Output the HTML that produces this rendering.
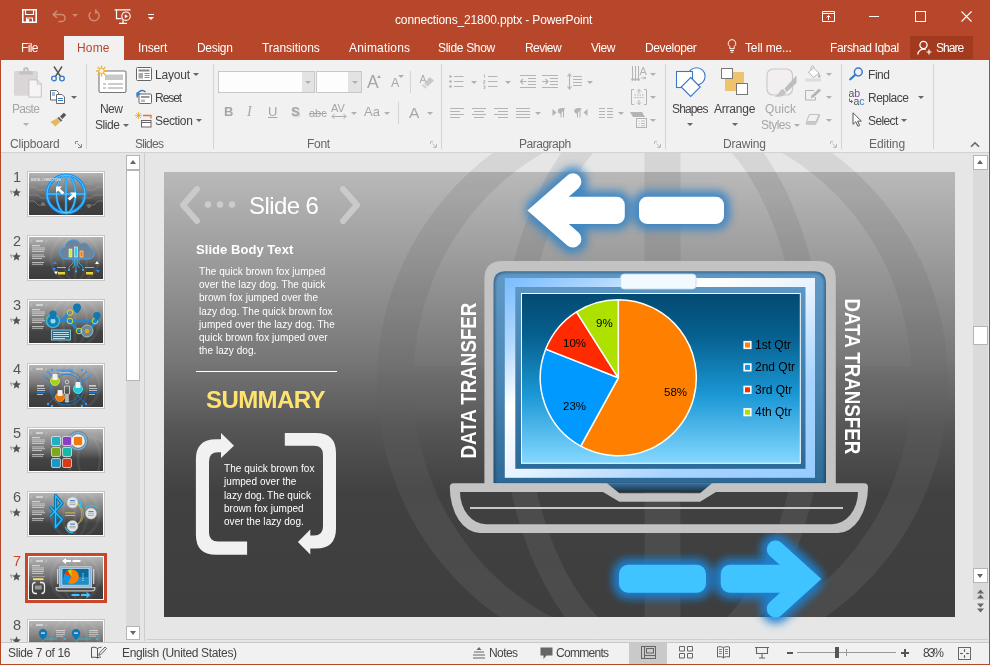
<!DOCTYPE html>
<html lang="en">
<head>
<meta charset="utf-8">
<title>connections_21800.pptx - PowerPoint</title>
<style>
html,body{margin:0;padding:0;}
body{width:990px;height:665px;position:relative;overflow:hidden;background:#e6e6e6;font-family:"Liberation Sans",sans-serif;font-size:12px;color:#444;}
.a{position:absolute;}
.t{position:absolute;will-change:transform;white-space:nowrap;line-height:14px;font-size:12px;color:#444;letter-spacing:0;}
.w{color:#fff;}
.g{color:#a6a6a6;}
.lbl{color:#666;}
.sep{position:absolute;width:1px;background:#d4d4d4;top:64px;height:85px;}
svg{position:absolute;overflow:visible;will-change:transform;}
.w{will-change:transform;}
.dd{position:absolute;width:0;height:0;border-left:3px solid transparent;border-right:3px solid transparent;border-top:3px solid #666;}
.ddg{border-top-color:#b0b0b0;}
</style>
</head>
<body>
<!-- ===== title bar + tab row ===== -->
<div class="a" id="titlebar" style="left:0;top:0;width:990px;height:60px;background:#b7472a;"></div>
<!-- quick access toolbar -->
<svg style="left:22px;top:9px" width="15" height="14" viewBox="0 0 15 14"><path d="M0.800 0.800h13.400v12.400h-13.400z" fill="none" stroke="#fff" stroke-width="1.600"/><path d="M3.500 1v4.500h8v-4.500 M4.500 13v-4h6v4" fill="none" stroke="#fff" stroke-width="1.200"/><rect x="5" y="10" width="2.2" height="3" fill="#fff"/></svg>
<svg style="left:52px;top:10px" width="15" height="12" viewBox="0 0 15 12"><path d="M5 0.8L1.2 4.4L5 8 M1.5 4.4H9.5a3.6 3.6 0 0 1 0 7.2H6.5" fill="none" stroke="#d08a74" stroke-width="1.5"/></svg>
<div class="dd" style="left:72px;top:14px;border-top-color:#d08a74"></div>
<svg style="left:87px;top:9px" width="14" height="13" viewBox="0 0 14 13"><path d="M3.6 3.2A5 5 0 1 0 8.6 2 M8.8 0.2v4.6" fill="none" stroke="#d08a74" stroke-width="1.5"/></svg>
<svg style="left:114px;top:9px" width="18" height="16" viewBox="0 0 18 16"><path d="M0.5 0.8h16 M2.5 1v8.6h5 M9 10v4 M5 14.4h8" fill="none" stroke="#fff" stroke-width="1.2"/><circle cx="12" cy="7.2" r="4.2" fill="#b7472a" stroke="#fff" stroke-width="1.1"/><path d="M10.8 5.2v4l3.2-2z" fill="#fff"/></svg>
<div class="a" style="left:148px;top:14px;width:6px;height:1px;background:#fff"></div>
<div class="dd" style="left:148px;top:17px;border-top-color:#fff"></div>
<span class="t w" style="left:395.2px;top:13px;letter-spacing:-0.14px">connections_21800.pptx - PowerPoint</span>
<!-- window controls -->
<svg style="left:822px;top:11px" width="13" height="11" viewBox="0 0 13 11"><path d="M0.5 0.5h12v10h-12z M0.5 2.5h12" fill="none" stroke="#fff" stroke-width="1"/><path d="M6.5 9V4.5 M4.5 6.5l2-2l2 2" fill="none" stroke="#fff" stroke-width="1"/></svg>
<div class="a" style="left:869px;top:16px;width:10px;height:1px;background:#fff"></div>
<div class="a" style="left:915px;top:11px;width:9px;height:9px;border:1px solid #fff"></div>
<svg style="left:961px;top:11px" width="11" height="11" viewBox="0 0 11 11"><path d="M0.5 0.5l10 10 M10.5 0.5l-10 10" fill="none" stroke="#fff" stroke-width="1.1"/></svg>
<!-- tabs -->
<div class="a" style="left:64px;top:36px;width:60px;height:24px;background:#f1f1f1"></div>
<span class="t w" style="left:21.1px;top:41px;letter-spacing:-0.65px">File</span>
<span class="t" style="left:77px;top:41px;color:#b7472a;letter-spacing:0.16px">Home</span>
<span class="t w" style="left:138.4px;top:41px;letter-spacing:-0.14px">Insert</span>
<span class="t w" style="left:196.5px;top:41px;letter-spacing:-0.31px">Design</span>
<span class="t w" style="left:261.6px;top:41px;letter-spacing:-0.04px">Transitions</span>
<span class="t w" style="left:348.5px;top:41px;letter-spacing:0.18px">Animations</span>
<span class="t w" style="left:438.4px;top:41px;letter-spacing:-0.31px">Slide Show</span>
<span class="t w" style="left:524.8px;top:41px;letter-spacing:-0.55px">Review</span>
<span class="t w" style="left:590.9px;top:41px;letter-spacing:-0.5px">View</span>
<span class="t w" style="left:645.2px;top:41px;letter-spacing:-0.36px">Developer</span>
<svg style="left:727px;top:39px" width="10" height="14" viewBox="0 0 10 14"><path d="M5 0.6a3.8 3.8 0 0 1 2.2 6.9v2.2h-4.4v-2.2A3.8 3.8 0 0 1 5 0.6z M3 11.5h4 M3.6 13.2h2.8" fill="none" stroke="#fff" stroke-width="1"/></svg>
<span class="t w" style="left:744.5px;top:41px;letter-spacing:-0.14px">Tell me...</span>
<span class="t w" style="left:829.9px;top:41px;letter-spacing:-0.35px">Farshad Iqbal</span>
<div class="a" style="left:910px;top:36px;width:63px;height:23px;background:#a23a20"></div>
<svg style="left:917px;top:40px" width="16" height="16" viewBox="0 0 16 16"><circle cx="6.5" cy="5" r="3.6" fill="none" stroke="#fff" stroke-width="1.3"/><path d="M0.8 14.5a5.8 5.8 0 0 1 8-5" fill="none" stroke="#fff" stroke-width="1.3"/><path d="M12 9.5v5 M9.5 12h5" stroke="#fff" stroke-width="1.2"/></svg>
<span class="t w" style="left:936px;top:41px;letter-spacing:-0.96px">Share</span>

<!-- ===== ribbon ===== -->
<div class="a" id="ribbon" style="left:1px;top:60px;width:988px;height:92px;background:#f1f1f1;border-bottom:1px solid #d2d2d2;"></div>
<!-- ===== Clipboard group ===== -->
<svg style="left:13px;top:67px" width="30" height="32" viewBox="0 0 30 32"><rect x="1" y="4" width="24" height="24.700" rx="1.500" fill="#dad6d8"/><path d="M6.200 7.600V4.300h4V2.800a2.800 2.800 0 0 1 5.600 0V4.300h4V7.600Z" fill="#c6c2c4"/><circle cx="13" cy="3.300" r="1" fill="#eee"/><path d="M15.900 12.900h8.300l4.100 4.100v13.100h-12.400z" fill="#f7f4f7" stroke="#c6c0c4" stroke-width="1"/><path d="M24.200 12.900v4.100h4.100" fill="none" stroke="#c6c0c4" stroke-width="1"/></svg>
<span class="t g" style="left:11.7px;top:102px;letter-spacing:-0.72px">Paste</span>
<div class="dd ddg" style="left:23px;top:123px"></div>
<svg style="left:50px;top:66px" width="16" height="16" viewBox="0 0 16 16"><path d="M4 0.500L10.500 10.500 M12 0.500L5.500 10.500" stroke="#555" stroke-width="1.4" fill="none"/><circle cx="4" cy="12.500" r="2.300" fill="none" stroke="#3b78c3" stroke-width="1.300"/><circle cx="12" cy="12.500" r="2.300" fill="none" stroke="#3b78c3" stroke-width="1.300"/></svg>
<svg style="left:50px;top:90px" width="16" height="14" viewBox="0 0 16 14"><path d="M0.500 0.500h6l2 2v7.500h-8z" fill="#fff" stroke="#666" stroke-width="1"/><path d="M6.500 4.500h5.500l2.500 2.500v6.500h-8z" fill="#fff" stroke="#666" stroke-width="1"/><path d="M8 8.500h5 M8 10.500h5" stroke="#3b78c3" stroke-width="1"/><path d="M2 3h3 M2 5h3" stroke="#3b78c3" stroke-width="1"/></svg>
<div class="dd" style="left:71px;top:96px"></div>
<svg style="left:50px;top:112px" width="17" height="15" viewBox="0 0 17 15"><path d="M10 4.500l3.800-3.800l2.400 2.400l-3.800 3.800z" fill="#555"/><path d="M8.800 4.800l3.600 3.600l-1.600 1.400l-3.600-3.500z" fill="#666"/><path d="M6.800 6.600l3.500 3.500l-5 4.400l-4.800-4.800z" fill="#eab85c"/></svg>
<span class="t lbl" style="left:10.2px;top:137px;letter-spacing:-0.21px">Clipboard</span>
<svg style="left:75px;top:141px" width="7" height="7" viewBox="0 0 7 7"><path d="M0.500 3V0.500H3 M6.500 3v3.500H3 M2.500 2.500l3.500 3.500" fill="none" stroke="#888" stroke-width="1"/></svg>
<div class="sep" style="left:86px"></div>
<!-- ===== Slides group ===== -->
<svg style="left:95px;top:65px" width="32" height="29" viewBox="0 0 32 29"><rect x="4" y="6" width="27" height="21.500" rx="1.500" fill="#fff" stroke="#777" stroke-width="1.100"/><rect x="10" y="9.500" width="18" height="5.500" fill="#c9c9c9"/><path d="M8 19h3 M13 19h15 M8 23h3 M13 23h15" stroke="#999" stroke-width="1"/><path d="M6.500 0.500v11 M1 6h11 M2.600 2.100l7.800 7.800 M10.400 2.100l-7.800 7.800" stroke="#f0b43c" stroke-width="1.400"/><circle cx="6.500" cy="6" r="2.600" fill="#fff6dc" stroke="#f0b43c" stroke-width="1"/></svg>
<span class="t" style="left:99.9px;top:102px;letter-spacing:-0.55px">New</span>
<span class="t" style="left:94.5px;top:118px;letter-spacing:-0.42px">Slide</span>
<div class="dd" style="left:123px;top:124px"></div>
<svg style="left:136px;top:67px" width="16" height="14" viewBox="0 0 16 14"><rect x="0.500" y="0.500" width="15" height="13" rx="1" fill="#fff" stroke="#666" stroke-width="1"/><rect x="2.500" y="2.500" width="11" height="2" fill="#888"/><rect x="2.500" y="6" width="4.500" height="5.500" fill="#aaa"/><path d="M8.500 6.500h5 M8.500 8.500h5 M8.500 10.500h5" stroke="#888" stroke-width="1"/></svg>
<span class="t" style="left:155px;top:68px;letter-spacing:-0.17px">Layout</span>
<div class="dd" style="left:193px;top:73px"></div>
<svg style="left:136px;top:89px" width="16" height="15" viewBox="0 0 16 15"><rect x="3" y="5" width="12.500" height="9.500" rx="1" fill="#fff" stroke="#666" stroke-width="1"/><rect x="5" y="7" width="8.500" height="2" fill="#999"/><rect x="5" y="10.500" width="4" height="2.500" fill="#bbb"/><path d="M1.500 8.500A5 5 0 0 1 9.500 3" fill="none" stroke="#3b78c3" stroke-width="1.500"/><path d="M0 3.500l4.500 0.500l-3 3.500z" fill="#3b78c3"/></svg>
<span class="t" style="left:155px;top:91px;letter-spacing:-1.04px">Reset</span>
<svg style="left:135px;top:112px" width="17" height="16" viewBox="0 0 17 16"><path d="M3.500 0v7 M0 3.500h7 M1 1l5 5 M6 1l-5 5" stroke="#f0b43c" stroke-width="1"/><path d="M8 3.500h8v3" fill="none" stroke="#e8703a" stroke-width="1.300"/><rect x="6.500" y="8.500" width="9.500" height="6.500" fill="#fff" stroke="#666" stroke-width="1"/><path d="M6.500 10.500h9.500" stroke="#666" stroke-width="1"/></svg>
<span class="t" style="left:155px;top:114px;letter-spacing:-0.37px">Section</span>
<div class="dd" style="left:196px;top:119px"></div>
<span class="t lbl" style="left:135px;top:137px;letter-spacing:-0.76px">Slides</span>
<div class="sep" style="left:213px"></div>
<!-- ===== Font group ===== -->
<div class="a" style="left:218px;top:71px;width:97px;height:22px;box-sizing:border-box;background:#fdfdfd;border:1px solid #c8c8c8"></div>
<div class="a" style="left:302px;top:72px;width:12px;height:20px;background:#e3e3e3"></div>
<div class="dd ddg" style="left:305px;top:81px"></div>
<div class="a" style="left:316px;top:71px;width:46px;height:22px;box-sizing:border-box;background:#fdfdfd;border:1px solid #c8c8c8"></div>
<div class="a" style="left:348px;top:72px;width:13px;height:20px;background:#e3e3e3"></div>
<div class="dd ddg" style="left:352px;top:81px"></div>
<span class="t g" style="left:367px;top:72px;font-size:17.500px;line-height:20px">A</span>
<div class="a" style="left:377px;top:75px;width:0;height:0;border-left:2.500px solid transparent;border-right:2.500px solid transparent;border-bottom:3px solid #aaa"></div>
<span class="t g" style="left:391px;top:76px;font-size:12.500px;line-height:15px">A</span>
<div class="dd ddg" style="left:398px;top:75px"></div>
<div class="a" style="left:410px;top:71px;width:1px;height:22px;background:#d4d4d4"></div>
<svg style="left:419px;top:74px" width="16" height="16" viewBox="0 0 16 16"><path d="M1 9L4 1L7 9 M2.200 6.300H5.900" fill="none" stroke="#a8a8a8" stroke-width="1"/><path d="M10.700 3.100L15 6.500L8.600 12.600L5.200 9.200Z" fill="#c9c7c8"/><path d="M4.300 9.900L7.900 13.300L6.400 14.800L2.800 11.300Z" fill="#d3d0d1"/></svg>
<span class="t g" style="left:224px;top:105px;font-weight:bold;font-size:13px">B</span>
<span class="t g" style="left:247px;top:105px;font-style:italic;font-family:'Liberation Serif',serif;font-size:14px">I</span>
<span class="t g" style="left:268px;top:105px;font-size:13px;text-decoration:underline">U</span>
<span class="t g" style="left:291px;top:105px;font-size:13px;font-weight:bold;text-shadow:1px 1px 1px #ccc">S</span>
<span class="t g" style="left:309px;top:106px;font-size:11px;text-decoration:line-through">abc</span>
<span class="t g" style="left:331px;top:101px;font-size:11px">AV</span>
<svg style="left:331px;top:113px" width="16" height="7" viewBox="0 0 16 7"><path d="M1 3.500h14 M3.500 1L1 3.500L3.500 6 M12.500 1L15 3.500L12.500 6" fill="none" stroke="#aaa" stroke-width="1"/></svg>
<div class="dd ddg" style="left:351px;top:112px"></div>
<span class="t g" style="left:364px;top:105px;font-size:13px">Aa</span>
<div class="dd ddg" style="left:384px;top:112px"></div>
<div class="a" style="left:398px;top:102px;width:1px;height:22px;background:#d4d4d4"></div>
<span class="t g" style="left:408.500px;top:104px;font-size:15.500px;line-height:18px">A</span>
<div class="dd ddg" style="left:427px;top:112px"></div>
<span class="t lbl" style="left:307px;top:137px;letter-spacing:-0.27px">Font</span>
<svg style="left:430px;top:141px" width="7" height="7" viewBox="0 0 7 7"><path d="M0.500 3V0.500H3 M6.500 3v3.500H3 M2.500 2.500l3.500 3.500" fill="none" stroke="#bbb" stroke-width="1"/></svg>
<div class="sep" style="left:441px"></div>
<!-- ===== Paragraph group ===== -->
<svg style="left:449px;top:74px" width="15" height="15" viewBox="0 0 15 15"><path d="M5 2.500h9.500 M5 7.500h9.500 M5 12.500h9.500" stroke="#b4b4b4" stroke-width="1"/><circle cx="1.500" cy="2.500" r="1.300" fill="#b4b4b4"/><circle cx="1.500" cy="7.500" r="1.300" fill="#b4b4b4"/><circle cx="1.500" cy="12.500" r="1.300" fill="#b4b4b4"/></svg>
<div class="dd ddg" style="left:471px;top:81px"></div>
<svg style="left:483px;top:74px" width="15" height="15" viewBox="0 0 15 15"><path d="M5 2.500h9.500 M5 7.500h9.500 M5 12.500h9.500" stroke="#b4b4b4" stroke-width="1"/><path d="M0.500 1h1v3 M0.500 6.500h1.500v1.500h-1.500v1.500h1.500 M0.500 11.500h1.500v3h-1.500 M0.500 13h1.500" fill="none" stroke="#b4b4b4" stroke-width="0.800"/></svg>
<div class="dd ddg" style="left:505px;top:81px"></div>
<svg style="left:520px;top:74px" width="16" height="15" viewBox="0 0 16 15"><path d="M0 1.500h16 M8 4.500h8 M8 7.500h8 M8 10.500h8 M0 13.500h16" stroke="#b4b4b4" stroke-width="1"/><path d="M6.500 7.500h-6 M3 5L0.500 7.500L3 10" fill="none" stroke="#b4b4b4" stroke-width="1.200"/></svg>
<svg style="left:542px;top:74px" width="16" height="15" viewBox="0 0 16 15"><path d="M0 1.500h16 M8 4.500h8 M8 7.500h8 M8 10.500h8 M0 13.500h16" stroke="#b4b4b4" stroke-width="1"/><path d="M0 7.500h6 M3.500 5L6 7.500L3.500 10" fill="none" stroke="#b4b4b4" stroke-width="1.200"/></svg>
<svg style="left:567px;top:73px" width="15" height="17" viewBox="0 0 15 17"><path d="M6 3.500h9 M6 6.500h9 M6 9.500h9 M6 12.500h9" stroke="#b4b4b4" stroke-width="1"/><path d="M2.500 1v15 M0.500 3.500l2-2.500l2 2.500 M0.500 13.500l2 2.500l2-2.500" fill="none" stroke="#b4b4b4" stroke-width="1.100"/></svg>
<div class="dd ddg" style="left:587px;top:81px"></div>
<svg style="left:631px;top:66px" width="16" height="16" viewBox="0 0 16 16"><path d="M1.500 0v14.500 M4.500 0v14.500 M7.500 0v14.500 M0 12.500l1.500 2.500l1.500-2.500 M3 12.500l1.500 2.500l1.500-2.500 M6 12.500l1.500 2.500l1.500-2.500" fill="none" stroke="#b4b4b4" stroke-width="1"/><text x="8.500" y="9" font-family="Liberation Sans,sans-serif" font-size="11" fill="#b4b4b4">A</text><path d="M10 12h5 M12.500 11l2.500 1l-2.500 1" stroke="#b4b4b4" stroke-width="0.800" fill="none"/></svg>
<div class="dd ddg" style="left:650px;top:73px"></div>
<svg style="left:631px;top:89px" width="16" height="16" viewBox="0 0 16 16"><path d="M3 0.500h-2.500v15h2.500 M13 0.500h2.500v15h-2.500" fill="none" stroke="#b4b4b4" stroke-width="1"/><path d="M3.500 6h9 M3.500 8.500h9" stroke="#b4b4b4" stroke-width="1" stroke-dasharray="1.500 1"/><path d="M8 0.500v4 M6 2.500l2-2l2 2 M8 15.500v-4.500 M6 13.500l2 2l2-2" fill="none" stroke="#b4b4b4" stroke-width="1"/></svg>
<div class="dd ddg" style="left:650px;top:96px"></div>
<svg style="left:630px;top:111px" width="17" height="17" viewBox="0 0 17 17"><path d="M0 1h12l3 5h-12z" fill="#b4b4b4"/><rect x="6.500" y="7.500" width="10" height="9" fill="#f4f4f4" stroke="#b4b4b4" stroke-width="1"/><path d="M8.500 10h1 M11 10h4 M8.500 12.500h1 M11 12.500h4 M8.500 14.800h1 M11 14.800h4" stroke="#b4b4b4" stroke-width="0.900"/></svg>
<div class="dd ddg" style="left:650px;top:119px"></div>
<svg style="left:450px;top:108px" width="14" height="11" viewBox="0 0 14 11"><path d="M0 0.500h14 M0 3.500h10 M0 6.500h14 M0 9.500h10" stroke="#b4b4b4" stroke-width="1"/></svg>
<svg style="left:472px;top:108px" width="14" height="11" viewBox="0 0 14 11"><path d="M0 0.500h14 M2 3.500h10 M0 6.500h14 M2 9.500h10" stroke="#b4b4b4" stroke-width="1"/></svg>
<svg style="left:494px;top:108px" width="14" height="11" viewBox="0 0 14 11"><path d="M0 0.500h14 M4 3.500h10 M0 6.500h14 M4 9.500h10" stroke="#b4b4b4" stroke-width="1"/></svg>
<svg style="left:516px;top:108px" width="14" height="11" viewBox="0 0 14 11"><path d="M0 0.500h14 M0 3.500h14 M0 6.500h14 M0 9.500h14" stroke="#b4b4b4" stroke-width="1"/></svg>
<div class="dd ddg" style="left:535px;top:112px"></div>
<svg style="left:552px;top:108px" width="14" height="10" viewBox="0 0 14 10"><path d="M0.500 1l4 3.500l-4 3.500z" fill="#b4b4b4"/><path d="M9 0.500v9 M11.500 0.500v9 M13 0.700h-4.500a2.300 2.300 0 0 0 0 4.600h0.500" fill="#b4b4b4" stroke="#b4b4b4" stroke-width="1"/></svg>
<svg style="left:574px;top:108px" width="14" height="10" viewBox="0 0 14 10"><path d="M13.500 1l-4 3.500l4 3.500z" fill="#b4b4b4"/><path d="M3.500 0.500v9 M6 0.500v9 M7.500 0.700h-4.500a2.300 2.300 0 0 0 0 4.600h0.500" fill="#b4b4b4" stroke="#b4b4b4" stroke-width="1"/></svg>
<svg style="left:599px;top:108px" width="14" height="11" viewBox="0 0 14 11"><path d="M0 0.500h6 M8 0.500h6 M0 3.500h6 M8 3.500h6 M0 6.500h6 M8 6.500h6 M0 9.500h6 M8 9.500h6" stroke="#b4b4b4" stroke-width="1"/></svg>
<div class="dd ddg" style="left:618px;top:112px"></div>
<span class="t lbl" style="left:519px;top:137px;letter-spacing:-0.49px">Paragraph</span>
<svg style="left:654px;top:141px" width="7" height="7" viewBox="0 0 7 7"><path d="M0.500 3V0.500H3 M6.500 3v3.500H3 M2.500 2.500l3.500 3.500" fill="none" stroke="#bbb" stroke-width="1"/></svg>
<div class="sep" style="left:665px"></div>
<!-- ===== Drawing group ===== -->
<svg style="left:674px;top:66px" width="34" height="34" viewBox="0 0 34 34"><circle cx="22.500" cy="10.300" r="8.600" fill="#fff" stroke="#3b78c3" stroke-width="1.100"/><rect x="2.500" y="5.500" width="16" height="16" fill="#fff" stroke="#3b78c3" stroke-width="1.100"/><path d="M16.700 11.500l9.500 9.500l-9.500 9.500l-9.500-9.500z" fill="#fff" stroke="#3b78c3" stroke-width="1.100"/></svg>
<span class="t" style="left:671.5px;top:102px;letter-spacing:-0.86px">Shapes</span>
<div class="dd" style="left:687px;top:123px"></div>
<div class="a" style="left:725px;top:72px;width:19px;height:19px;background:#eec36d"></div>
<div class="a" style="left:721px;top:68px;width:12px;height:11px;box-sizing:border-box;background:#fff;border:1px solid #777"></div>
<div class="a" style="left:736px;top:83px;width:12px;height:12px;box-sizing:border-box;background:#fff;border:1px solid #777"></div>
<span class="t" style="left:714.2px;top:102px;letter-spacing:-0.23px">Arrange</span>
<div class="dd" style="left:732px;top:123px"></div>
<svg style="left:765px;top:66px" width="34" height="33" viewBox="0 0 34 33"><rect x="2" y="3" width="25.500" height="26" rx="6" fill="#f3eff1" stroke="#c8c8c8" stroke-width="1.100"/><path d="M31.500 9.500l-12 13l2 3.500l10-9z" fill="#bdbdbd"/><path d="M18 23c-3 0-3 5-8.500 7.500c5 1 10.500-0.500 11.500-4z" fill="#c4c4c4"/></svg>
<span class="t g" style="left:764.5px;top:102px;letter-spacing:0.08px">Quick</span>
<span class="t g" style="left:760.5px;top:118px;letter-spacing:-0.54px">Styles</span>
<div class="dd ddg" style="left:794px;top:124px"></div>
<svg style="left:805px;top:66px" width="17" height="16" viewBox="0 0 17 16"><path d="M3.500 6l5-4l5.500 5l-5.500 4.500z" fill="#fff" stroke="#b4b4b4" stroke-width="1"/><path d="M6 4V1.500a1.500 1.500 0 0 1 3 0v1" fill="none" stroke="#b4b4b4" stroke-width="1"/><path d="M14 7c1 1.500 1.500 2.500 1.500 3.500a1.300 1.300 0 0 1-2.600 0z" fill="#b4b4b4"/><rect x="0" y="12.500" width="16" height="3" fill="#e0dcdc"/></svg>
<div class="dd ddg" style="left:826px;top:73px"></div>
<svg style="left:805px;top:88px" width="17" height="13" viewBox="0 0 17 13"><path d="M9 2.500h-8.500v9.500h10v-3" fill="none" stroke="#b4b4b4" stroke-width="1"/><path d="M14 0.500l2 2l-7.500 7l-2.800 0.800l0.800-2.800z" fill="#b4b4b4"/></svg>
<div class="dd ddg" style="left:826px;top:96px"></div>
<svg style="left:805px;top:113px" width="16" height="13" viewBox="0 0 16 13"><path d="M4 1h10l1.500 1l-3.500 8l-1.500 2h-9l-1-1.500z" fill="#c9c9c9"/><path d="M4.500 1.500h9.500l-3 7h-9.500z" fill="#f3f0f0" stroke="#bcbcbc" stroke-width="0.800"/></svg>
<div class="dd ddg" style="left:826px;top:119px"></div>
<span class="t lbl" style="left:723.2px;top:137px;letter-spacing:-0.2px">Drawing</span>
<svg style="left:830px;top:141px" width="7" height="7" viewBox="0 0 7 7"><path d="M0.500 3V0.500H3 M6.500 3v3.500H3 M2.500 2.500l3.500 3.500" fill="none" stroke="#bbb" stroke-width="1"/></svg>
<div class="sep" style="left:841px"></div>
<!-- ===== Editing group ===== -->
<svg style="left:849px;top:67px" width="15" height="14" viewBox="0 0 15 14"><circle cx="9.300" cy="5" r="3.900" fill="none" stroke="#3b78c3" stroke-width="1.500"/><path d="M6.300 7.800L1.300 12.300" stroke="#3b78c3" stroke-width="2.200" stroke-linecap="round"/></svg>
<span class="t" style="left:868px;top:68px;letter-spacing:-0.45px">Find</span>
<svg style="left:848px;top:89px" width="18" height="16" viewBox="0 0 18 16"><text x="0.500" y="7.500" font-family="Liberation Sans,sans-serif" font-size="10.500" fill="#555">a</text><text x="6.300" y="7.500" font-family="Liberation Sans,sans-serif" font-size="10.500" fill="#8a3fa0">b</text><text x="5.500" y="15.500" font-family="Liberation Sans,sans-serif" font-size="10.500" fill="#555">a</text><text x="11.300" y="15.500" font-family="Liberation Sans,sans-serif" font-size="10.500" fill="#3b78c3">c</text><path d="M1.500 9.500v3h3 M3 11l1.500 1.500l-1.500 1.500" fill="none" stroke="#3b78c3" stroke-width="1"/></svg>
<span class="t" style="left:868px;top:91px;letter-spacing:-0.52px">Replace</span>
<div class="dd" style="left:918px;top:96px"></div>
<svg style="left:852px;top:112px" width="11" height="15" viewBox="0 0 11 15"><path d="M1 0.800v11.500l2.800-2.600l2 4.500l1.800-0.800l-2-4.300h3.800z" fill="#fff" stroke="#555" stroke-width="1"/></svg>
<span class="t" style="left:868px;top:114px;letter-spacing:-0.61px">Select</span>
<div class="dd" style="left:901px;top:119px"></div>
<span class="t lbl" style="left:869px;top:137px;letter-spacing:-0.1px">Editing</span>
<div class="sep" style="left:933px"></div>
<svg style="left:970px;top:141px" width="10" height="7" viewBox="0 0 10 7"><path d="M1 5.800l4-4l4 4" fill="none" stroke="#666" stroke-width="1.600"/></svg>

<!-- ===== workspace ===== -->
<div class="a" id="work" style="left:1px;top:153px;width:988px;height:489px;background:#e6e6e6;"></div>
<!-- ===== thumbnails ===== -->
<svg width="0" height="0" style="left:0;top:0"><defs><linearGradient id="tbg" x1="0" y1="0" x2="0" y2="1"><stop offset="0" stop-color="#b4b4b4"/><stop offset="0.450" stop-color="#757575"/><stop offset="0.720" stop-color="#434343"/><stop offset="1" stop-color="#3c3c3c"/></linearGradient></defs></svg>
<span class="t" style="left:13px;top:169px;width:8px;text-align:center;font-size:14.500px;line-height:17px;letter-spacing:0;color:#555">1</span>
<svg style="left:10px;top:188px" width="11" height="9" viewBox="0 0 11 9"><path d="M6.500 0.300l1.300 2.900l3 0.300l-2.300 2l0.700 3l-2.700-1.600l-2.700 1.600l0.700-3l-2.300-2l3-0.300z" fill="#555"/><path d="M0.300 3.200h1.800 M0.800 5h1.200" stroke="#555" stroke-width="0.800"/></svg>
<div class="a" style="left:27px;top:171px;width:78px;height:46px;box-sizing:border-box;border:1px solid #c6c6c6;background:#fff"></div>
<svg style="left:29px;top:173px;overflow:hidden" width="74" height="42" viewBox="0 0 74 42"><rect width="74" height="42" fill="url(#tbg)"/><g stroke="#a8a8a8" stroke-width="0.800" fill="none" opacity="0.550"><path d="M0 8h8l3 3h12 M0 14h6l3 3h10 M0 22h9l3 3h10 M0 28h5l4 4h8 M74 8h-8l-3 3h-12 M74 14h-6l-3 3h-10 M74 22h-9l-3 3h-10 M74 28h-5l-4 4h-8"/><circle cx="14" cy="31" r="1.500" fill="#999"/><circle cx="60" cy="8" r="1.500" fill="#999"/><circle cx="60" cy="33" r="1.500" fill="#999"/></g><g fill="none" stroke="#1590f0" stroke-width="3.200"><circle cx="37" cy="21" r="19"/><ellipse cx="37" cy="21" rx="9.500" ry="19" stroke-width="2.400"/><path d="M37 2v38 M18 21h38" stroke-width="2.400"/></g><g fill="none" stroke="#58ccff" stroke-width="1"><circle cx="37" cy="21" r="19"/><ellipse cx="37" cy="21" rx="9.500" ry="19"/><path d="M37 2v38 M18 21h38"/></g><g fill="#fff"><path d="M27 13.500h6l-2 2l4.300 4.100l-2 2l-4.300-4.100l-2 2z"/><path d="M47 19.500v6l-2-2l-4.300 4.100l-2-2l4.300-4.100l-2-2z"/></g><text x="2" y="8" font-family="Liberation Sans,sans-serif" font-size="2.600" font-weight="bold" fill="#eee" opacity="0.900">DIGITAL CONNECTIONS</text></svg>
<span class="t" style="left:13px;top:233px;width:8px;text-align:center;font-size:14.500px;line-height:17px;letter-spacing:0;color:#555">2</span>
<svg style="left:10px;top:252px" width="11" height="9" viewBox="0 0 11 9"><path d="M6.500 0.300l1.300 2.900l3 0.300l-2.300 2l0.700 3l-2.700-1.600l-2.700 1.600l0.700-3l-2.300-2l3-0.300z" fill="#555"/><path d="M0.300 3.200h1.800 M0.800 5h1.200" stroke="#555" stroke-width="0.800"/></svg>
<div class="a" style="left:27px;top:235px;width:78px;height:46px;box-sizing:border-box;border:1px solid #c6c6c6;background:#fff"></div>
<svg style="left:29px;top:237px;overflow:hidden" width="74" height="42" viewBox="0 0 74 42"><rect width="74" height="42" fill="url(#tbg)"/><g fill="none" stroke="#fff" opacity="0.060"><circle cx="46" cy="21" r="24" stroke-width="3"/><ellipse cx="46" cy="21" rx="12" ry="23" stroke-width="2.500"/><path d="M46 0v42" stroke-width="3"/></g><g fill="#e8e8e8" opacity="0.800"><rect x="7" y="3.200" width="7" height="1.600"/><path d="M2.800 2.500l-1.300 1.500l1.300 1.500 M16.500 2.500l1.300 1.500l-1.300 1.500" stroke="#ddd" stroke-width="0.600" fill="none"/></g><g fill="#e6e6e6" opacity="0.750"><rect x="3" y="8" width="8" height="1.200"/><rect x="3" y="10.500" width="13" height="0.900"/><rect x="3" y="12.300" width="13" height="0.900"/><rect x="3" y="14.100" width="12" height="0.900"/><rect x="3" y="17.500" width="12" height="0.900"/><rect x="3" y="19.300" width="13" height="0.900"/><rect x="3" y="21.100" width="10" height="0.900"/><rect x="3" y="25" width="12" height="0.900"/><rect x="3" y="26.800" width="11" height="0.900"/></g><path d="M36 22h24a5.500 5.500 0 0 0 1-10.800a6.500 6.500 0 0 0-9.500-4.500a8.500 8.500 0 0 0-15.500 3.300a6.100 6.100 0 0 0 0 12z" fill="#6e8397" stroke="#36a8ff" stroke-width="1"/><rect x="40" y="12" width="3" height="8" fill="#c8ee2a" stroke="#fff" stroke-width="0.500"/><rect x="45.500" y="10" width="3" height="10" fill="#2ad6ee" stroke="#fff" stroke-width="0.500"/><rect x="51" y="14" width="3" height="6" fill="#ff7a00" stroke="#fff" stroke-width="0.500"/><g stroke="#36c0ff" stroke-width="0.700" fill="none"><path d="M44 22v4l-4 4v3 M47 22v12 M50 22v4l4 4v3 M45.500 22v6l-2 3 M48.500 22v6l2 3"/></g><g fill="#36c0ff"><circle cx="40" cy="33" r="1"/><circle cx="47" cy="34.500" r="1"/><circle cx="54" cy="33" r="1"/></g><path d="M24 27l2-3l2 3z M23 31l2 3l2-3z" fill="#2a8cff"/><path d="M25 34.500l2 3l2-3z" fill="#fff"/><path d="M66 27l2-3l2 3z" fill="#fff"/><path d="M67 33l2 3l2-3z" fill="#2a8cff"/><rect x="29" y="35" width="7" height="2.500" fill="#e8d23a"/><rect x="57" y="35" width="7" height="2.500" fill="#e8d23a"/><rect x="28" y="30" width="9" height="0.800" fill="#ccc"/><rect x="56" y="30" width="9" height="0.800" fill="#ccc"/></svg>
<span class="t" style="left:13px;top:297px;width:8px;text-align:center;font-size:14.500px;line-height:17px;letter-spacing:0;color:#555">3</span>
<svg style="left:10px;top:316px" width="11" height="9" viewBox="0 0 11 9"><path d="M6.500 0.300l1.300 2.900l3 0.300l-2.300 2l0.700 3l-2.700-1.600l-2.700 1.600l0.700-3l-2.300-2l3-0.300z" fill="#555"/><path d="M0.300 3.200h1.800 M0.800 5h1.200" stroke="#555" stroke-width="0.800"/></svg>
<div class="a" style="left:27px;top:299px;width:78px;height:46px;box-sizing:border-box;border:1px solid #c6c6c6;background:#fff"></div>
<svg style="left:29px;top:301px;overflow:hidden" width="74" height="42" viewBox="0 0 74 42"><rect width="74" height="42" fill="url(#tbg)"/><g fill="none" stroke="#fff" opacity="0.060"><circle cx="46" cy="21" r="24" stroke-width="3"/><ellipse cx="46" cy="21" rx="12" ry="23" stroke-width="2.500"/><path d="M46 0v42" stroke-width="3"/></g><g fill="#e8e8e8" opacity="0.800"><rect x="7" y="3.200" width="7" height="1.600"/><path d="M2.800 2.500l-1.300 1.500l1.300 1.500 M16.500 2.500l1.300 1.500l-1.300 1.500" stroke="#ddd" stroke-width="0.600" fill="none"/></g><g fill="#e6e6e6" opacity="0.750"><rect x="3" y="8" width="8" height="1.200"/><rect x="3" y="10.500" width="13" height="0.900"/><rect x="3" y="12.300" width="13" height="0.900"/><rect x="3" y="14.100" width="12" height="0.900"/><rect x="3" y="17.500" width="12" height="0.900"/><rect x="3" y="19.300" width="13" height="0.900"/><rect x="3" y="21.100" width="10" height="0.900"/><rect x="3" y="25" width="12" height="0.900"/><rect x="3" y="26.800" width="11" height="0.900"/></g><g stroke="#1a8cd8" stroke-width="2.600" fill="none" opacity="0.900"><path d="M24 20h46 M40 12l-8 8 M40 20l10 10h8 M58 30l10-10"/></g><circle cx="24" cy="20" r="6.500" fill="#1580b8" stroke="#43c6e8" stroke-width="1.200"/><circle cx="24" cy="20" r="2.500" fill="#8ee0f0"/><circle cx="58" cy="30" r="6" fill="#6a8a94" stroke="#9ac0c8" stroke-width="1"/><circle cx="58" cy="30" r="2.300" fill="#e8a020"/><g fill="none" stroke="#d8e83a" stroke-width="0.900"><circle cx="41" cy="11.500" r="2.800"/><circle cx="41" cy="20" r="2.800"/><circle cx="50" cy="30" r="2.800"/><circle cx="66" cy="20" r="2.800"/></g><path d="M48 2.500a4 4 0 0 1 4 4c0 3-4 6-4 6s-4-3-4-6a4 4 0 0 1 4-4z" fill="#1278b0"/><path d="M68 11a3.600 3.600 0 0 1 3.600 3.600c0 2.700-3.600 5.400-3.600 5.400s-3.600-2.700-3.600-5.400a3.600 3.600 0 0 1 3.600-3.600z" fill="#1278b0"/><path d="M24 9.500a3.600 3.600 0 0 1 3.600 3.600c0 2.700-3.600 5.400-3.600 5.400s-3.600-2.700-3.600-5.400a3.600 3.600 0 0 1 3.600-3.600z" fill="#1278b0"/><rect x="22.500" y="29" width="19" height="10" fill="#2a6a8a" stroke="#8fe0f0" stroke-width="0.800"/><g fill="#cfeef6"><rect x="24" y="31" width="16" height="0.900"/><rect x="24" y="33" width="16" height="0.900"/><rect x="24" y="35" width="16" height="0.900"/><rect x="24" y="37" width="12" height="0.900"/></g></svg>
<span class="t" style="left:13px;top:361px;width:8px;text-align:center;font-size:14.500px;line-height:17px;letter-spacing:0;color:#555">4</span>
<svg style="left:10px;top:380px" width="11" height="9" viewBox="0 0 11 9"><path d="M6.500 0.300l1.300 2.900l3 0.300l-2.300 2l0.700 3l-2.700-1.600l-2.700 1.600l0.700-3l-2.300-2l3-0.300z" fill="#555"/><path d="M0.300 3.200h1.800 M0.800 5h1.200" stroke="#555" stroke-width="0.800"/></svg>
<div class="a" style="left:27px;top:363px;width:78px;height:46px;box-sizing:border-box;border:1px solid #c6c6c6;background:#fff"></div>
<svg style="left:29px;top:365px;overflow:hidden" width="74" height="42" viewBox="0 0 74 42"><rect width="74" height="42" fill="url(#tbg)"/><g fill="none" stroke="#fff" opacity="0.060"><circle cx="46" cy="21" r="24" stroke-width="3"/><ellipse cx="46" cy="21" rx="12" ry="23" stroke-width="2.500"/><path d="M46 0v42" stroke-width="3"/></g><g fill="#e8e8e8" opacity="0.800"><rect x="7" y="3.200" width="7" height="1.600"/><path d="M2.800 2.500l-1.300 1.500l1.300 1.500 M16.500 2.500l1.300 1.500l-1.300 1.500" stroke="#ddd" stroke-width="0.600" fill="none"/></g><g fill="none" stroke="#1a7fe0" stroke-width="0.900" opacity="0.850"><circle cx="38" cy="23" r="14"/><circle cx="38" cy="23" r="17"/><path d="M20 8l8 8 M56 8l-8 8 M20 38l8-8 M56 38l-8-8 M16 12l8 6 M60 12l-8 6"/></g><g fill="#3a9cff"><circle cx="19" cy="7" r="1.200"/><circle cx="23" cy="5" r="1.200"/><circle cx="15" cy="11" r="1.200"/><circle cx="57" cy="7" r="1.200"/><circle cx="53" cy="5" r="1.200"/><circle cx="61" cy="11" r="1.200"/><circle cx="19" cy="39" r="1.200"/><circle cx="57" cy="39" r="1.200"/><circle cx="23" cy="41" r="1.200"/><circle cx="53" cy="41" r="1.200"/></g><circle cx="26" cy="16" r="4.500" fill="#a8d020" stroke="#d8f060" stroke-width="0.700"/><circle cx="31" cy="32" r="4.500" fill="#e87a10" stroke="#ffb050" stroke-width="0.700"/><circle cx="49" cy="24" r="4.500" fill="#20c8d8" stroke="#80f0f8" stroke-width="0.700"/><g fill="#f0f0f0"><rect x="23.500" y="9" width="5" height="6" rx="0.800"/><rect x="28.500" y="25" width="5" height="6" rx="0.800"/><rect x="46.500" y="17" width="5" height="6" rx="0.800"/></g><g fill="none" stroke="#e0e0e0" stroke-width="0.800"><circle cx="38" cy="17" r="1.800"/><path d="M35.500 21h5v8h-1.200v8h-1v-8h-0.600v8h-1v-8h-1.200z"/></g><g fill="#e6e6e6" opacity="0.800"><rect x="8" y="20" width="7" height="1.600"/><rect x="8" y="23" width="8" height="0.900"/><rect x="8" y="25" width="8" height="0.900"/><rect x="8" y="29" width="6" height="0.900"/><rect x="60" y="20" width="7" height="1.600"/><rect x="60" y="23" width="8" height="0.900"/><rect x="60" y="25" width="8" height="0.900"/><rect x="60" y="29" width="6" height="0.900"/></g><rect x="8" y="27" width="8" height="0.900" fill="#1a7fe0"/><rect x="60" y="27" width="8" height="0.900" fill="#1a7fe0"/><rect x="27" y="4.500" width="17" height="1.200" fill="#3a9cff"/><rect x="30" y="7" width="11" height="0.800" fill="#ccc"/></svg>
<span class="t" style="left:13px;top:425px;width:8px;text-align:center;font-size:14.500px;line-height:17px;letter-spacing:0;color:#555">5</span>
<svg style="left:10px;top:444px" width="11" height="9" viewBox="0 0 11 9"><path d="M6.500 0.300l1.300 2.900l3 0.300l-2.300 2l0.700 3l-2.700-1.600l-2.700 1.600l0.700-3l-2.300-2l3-0.300z" fill="#555"/><path d="M0.300 3.200h1.800 M0.800 5h1.200" stroke="#555" stroke-width="0.800"/></svg>
<div class="a" style="left:27px;top:427px;width:78px;height:46px;box-sizing:border-box;border:1px solid #c6c6c6;background:#fff"></div>
<svg style="left:29px;top:429px;overflow:hidden" width="74" height="42" viewBox="0 0 74 42"><rect width="74" height="42" fill="url(#tbg)"/><g fill="none" stroke="#fff" opacity="0.070"><circle cx="60" cy="30" r="22" stroke-width="3"/><ellipse cx="60" cy="30" rx="11" ry="22" stroke-width="2.500"/></g><g fill="#e8e8e8" opacity="0.800"><rect x="7" y="3.200" width="7" height="1.600"/><path d="M2.800 2.500l-1.300 1.500l1.300 1.500 M16.500 2.500l1.300 1.500l-1.300 1.500" stroke="#ddd" stroke-width="0.600" fill="none"/></g><g fill="#e6e6e6" opacity="0.750"><rect x="3" y="8" width="8" height="1.200"/><rect x="3" y="10.500" width="13" height="0.900"/><rect x="3" y="12.300" width="13" height="0.900"/><rect x="3" y="14.100" width="12" height="0.900"/><rect x="3" y="17.500" width="12" height="0.900"/><rect x="3" y="19.300" width="13" height="0.900"/><rect x="3" y="21.100" width="10" height="0.900"/><rect x="3" y="25" width="12" height="0.900"/><rect x="3" y="26.800" width="11" height="0.900"/></g><circle cx="49" cy="12" r="10.500" fill="#5a7890" opacity="0.550"/><circle cx="49" cy="12" r="8.500" fill="none" stroke="#7ab8e8" stroke-width="1.200"/><circle cx="49" cy="12" r="6.800" fill="#f4f4f4"/><g stroke="#f0f0f0" stroke-width="0.700"><rect x="22.500" y="7.500" width="9" height="9" rx="1.500" fill="#1fb0c8"/><rect x="33.500" y="7.500" width="9" height="9" rx="1.500" fill="#8a3fc0"/><rect x="44.500" y="7.500" width="9" height="9" rx="1.500" fill="#f07a08"/><rect x="22.500" y="18.500" width="9" height="9" rx="1.500" fill="#7ea81a"/><rect x="33.500" y="18.500" width="9" height="9" rx="1.500" fill="#18b8a8"/><rect x="22.500" y="29.500" width="9" height="9" rx="1.500" fill="#1a98c8"/><rect x="33.500" y="29.500" width="9" height="9" rx="1.500" fill="#d83a18"/></g></svg>
<span class="t" style="left:13px;top:489px;width:8px;text-align:center;font-size:14.500px;line-height:17px;letter-spacing:0;color:#555">6</span>
<svg style="left:10px;top:508px" width="11" height="9" viewBox="0 0 11 9"><path d="M6.500 0.300l1.300 2.900l3 0.300l-2.300 2l0.700 3l-2.700-1.600l-2.700 1.600l0.700-3l-2.300-2l3-0.300z" fill="#555"/><path d="M0.300 3.200h1.800 M0.800 5h1.200" stroke="#555" stroke-width="0.800"/></svg>
<div class="a" style="left:27px;top:491px;width:78px;height:46px;box-sizing:border-box;border:1px solid #c6c6c6;background:#fff"></div>
<svg style="left:29px;top:493px;overflow:hidden" width="74" height="42" viewBox="0 0 74 42"><rect width="74" height="42" fill="url(#tbg)"/><g fill="none" stroke="#fff" opacity="0.060"><circle cx="46" cy="21" r="24" stroke-width="3"/><ellipse cx="46" cy="21" rx="12" ry="23" stroke-width="2.500"/><path d="M46 0v42" stroke-width="3"/></g><g fill="#e8e8e8" opacity="0.800"><rect x="7" y="3.200" width="7" height="1.600"/><path d="M2.800 2.500l-1.300 1.500l1.300 1.500 M16.500 2.500l1.300 1.500l-1.300 1.500" stroke="#ddd" stroke-width="0.600" fill="none"/></g><g fill="#e6e6e6" opacity="0.750"><rect x="3" y="8" width="8" height="1.200"/><rect x="3" y="10.500" width="13" height="0.900"/><rect x="3" y="12.300" width="13" height="0.900"/><rect x="3" y="14.100" width="12" height="0.900"/><rect x="3" y="17.500" width="12" height="0.900"/><rect x="3" y="19.300" width="13" height="0.900"/><rect x="3" y="21.100" width="10" height="0.900"/><rect x="3" y="25" width="12" height="0.900"/><rect x="3" y="26.800" width="11" height="0.900"/></g><g fill="none" stroke="#e8d040" stroke-width="0.700" opacity="0.800"><path d="M46 8a16 16 0 0 1 0 26 M49 11a12 12 0 0 1 0 20"/></g><path d="M21 13.500l12 13l-6.500 8v-32l6.500 8l-12 13" fill="none" stroke="#0a6aa0" stroke-width="3.200" stroke-linejoin="round"/><path d="M21 13.500l12 13l-6.500 8v-32l6.500 8l-12 13" fill="none" stroke="#22c4ff" stroke-width="1.300" stroke-linejoin="round"/><g fill="#e4e4e4" stroke="#b8b8b8" stroke-width="0.600"><circle cx="43.500" cy="9.500" r="5.500"/><circle cx="43.500" cy="33" r="5.500"/><circle cx="62" cy="20.500" r="5.500"/></g><g fill="none" stroke="#22c4ff" stroke-width="1.200"><path d="M50 7a8 8 0 0 1 1 8"/><path d="M36.500 34a8 8 0 0 0 8 6"/><path d="M56 16a7.500 7.500 0 0 1 12-1"/></g><g fill="#3a8cd0"><rect x="41" y="7" width="5" height="1.200"/><rect x="41" y="30.500" width="5" height="1.200"/><rect x="59.500" y="18" width="5" height="1.200"/></g><g fill="#999"><rect x="40.500" y="9.500" width="6" height="0.700"/><rect x="40.500" y="11" width="6" height="0.700"/><rect x="40.500" y="33" width="6" height="0.700"/><rect x="40.500" y="34.500" width="6" height="0.700"/><rect x="59" y="20.500" width="6" height="0.700"/><rect x="59" y="22" width="6" height="0.700"/></g><rect x="36" y="19.500" width="10" height="0.900" fill="#e8d040"/><rect x="36" y="22" width="10" height="0.900" fill="#e8d040"/></svg>
<span class="t" style="left:13px;top:553px;width:8px;text-align:center;font-size:14.500px;line-height:17px;letter-spacing:0;color:#c8472a">7</span>
<svg style="left:10px;top:572px" width="11" height="9" viewBox="0 0 11 9"><path d="M6.500 0.300l1.300 2.900l3 0.300l-2.300 2l0.700 3l-2.700-1.600l-2.700 1.600l0.700-3l-2.300-2l3-0.300z" fill="#555"/><path d="M0.300 3.200h1.800 M0.800 5h1.200" stroke="#555" stroke-width="0.800"/></svg>
<div class="a" style="left:25px;top:553px;width:82px;height:50px;box-sizing:border-box;border:3px solid #c8472a;background:#fff"></div>
<svg style="left:29px;top:557px;overflow:hidden" width="74" height="42" viewBox="0 0 74 42"><rect width="74" height="42" fill="url(#tbg)"/><g fill="none" stroke="#fff" opacity="0.060"><circle cx="46" cy="21" r="24" stroke-width="3"/><ellipse cx="46" cy="21" rx="12" ry="23" stroke-width="2.500"/><path d="M46 0v42" stroke-width="3"/></g><g fill="#e8e8e8" opacity="0.800"><rect x="7" y="3.200" width="7" height="1.600"/><path d="M2.800 2.500l-1.300 1.500l1.300 1.500 M16.500 2.500l1.300 1.500l-1.300 1.500" stroke="#ddd" stroke-width="0.600" fill="none"/></g><g fill="#e6e6e6" opacity="0.750"><rect x="3" y="8" width="8" height="1.200"/><rect x="3" y="10.500" width="12" height="0.900"/><rect x="3" y="12.300" width="12" height="0.900"/><rect x="3" y="14.100" width="12" height="0.900"/><rect x="3" y="15.900" width="11" height="0.900"/><rect x="3" y="19" width="13" height="0.500"/></g><rect x="4" y="21.300" width="10.500" height="1.800" fill="#ffe36e"/><path d="M6.500 25.500q-3 0-3 3v5q0 3 3 3h1.500 M11 25.500h1.500q3 0 3 3v5q0 3-3 3" fill="none" stroke="#eee" stroke-width="1.300"/><rect x="5.800" y="28.500" width="7" height="4" fill="#bbb" opacity="0.700"/><g fill="#fff"><path d="M33 4l4-3v2h5v2h-5v2z"/><rect x="43.500" y="3" width="8" height="2" rx="0.600"/></g><g fill="#40c4ff"><path d="M61.500 38l-4-3.200v2.100h-5.500v2.200h5.500v2.100z"/><rect x="42.500" y="36.900" width="8" height="2.200" rx="0.600"/></g><path d="M30 30v-19.500q0-1.500 1.500-1.500h30q1.500 0 1.500 1.500v19.500z" fill="#c2c2c2"/><rect x="31" y="10" width="31" height="19.500" fill="#7ab4e8"/><rect x="33" y="11.500" width="27" height="16.500" fill="#0a6a9c" stroke="#e8f4ff" stroke-width="0.600"/><rect x="33.300" y="20" width="26.400" height="7.700" fill="#2a9cd8" opacity="0.700"/><path d="M26.500 30h40v1q0 3.500-3.500 3.500h-33q-3.500 0-3.500-3.500z" fill="#c2c2c2"/><path d="M27.800 31.300h37.500q0 2-2.300 2h-33q-2.200 0-2.200-2z" fill="#444"/><circle cx="42.500" cy="19.700" r="7.300" fill="#ff8000"/><path d="M42.500 19.700l-3.500 6.400a7.300 7.300 0 0 1-3.300-9.100z" fill="#0099ff"/><path d="M42.500 19.700l-6.800-2.700a7.300 7.300 0 0 1 2.900-3.500z" fill="#ff2a00"/><path d="M42.500 19.700l-3.900-6.200a7.300 7.300 0 0 1 3.900-1.100z" fill="#aee000"/><g fill="#fff"><rect x="53.500" y="16.300" width="1" height="1"/><rect x="53.500" y="18.500" width="1" height="1"/><rect x="53.500" y="20.700" width="1" height="1"/><rect x="53.500" y="22.900" width="1" height="1"/></g><rect x="28" y="12" width="1.300" height="15" fill="#ddd" opacity="0.850"/><rect x="64" y="12" width="1.300" height="15" fill="#ddd" opacity="0.850"/></svg>
<span class="t" style="left:13px;top:617px;width:8px;text-align:center;font-size:14.500px;line-height:17px;letter-spacing:0;color:#555">8</span>
<svg style="left:10px;top:636px" width="11" height="9" viewBox="0 0 11 9"><path d="M6.500 0.300l1.300 2.900l3 0.300l-2.300 2l0.700 3l-2.700-1.600l-2.700 1.600l0.700-3l-2.300-2l3-0.300z" fill="#555"/><path d="M0.300 3.200h1.800 M0.800 5h1.200" stroke="#555" stroke-width="0.800"/></svg>
<div class="a" style="left:27px;top:619px;width:78px;height:46px;box-sizing:border-box;border:1px solid #c6c6c6;background:#fff"></div>
<svg style="left:29px;top:621px;overflow:hidden" width="74" height="42" viewBox="0 0 74 42"><rect width="74" height="42" fill="url(#tbg)"/><g fill="none" stroke="#fff" opacity="0.060"><circle cx="46" cy="21" r="24" stroke-width="3"/><ellipse cx="46" cy="21" rx="12" ry="23" stroke-width="2.500"/><path d="M46 0v42" stroke-width="3"/></g><g fill="#e8e8e8" opacity="0.800"><rect x="7" y="3.200" width="7" height="1.600"/><path d="M2.800 2.500l-1.300 1.500l1.300 1.500 M16.500 2.500l1.300 1.500l-1.300 1.500" stroke="#ddd" stroke-width="0.600" fill="none"/></g><g fill="none" stroke="#22c8e0" stroke-width="0.800"><path d="M4 24h10v-6h14 M36 24h12v-6h14"/></g><path d="M14 8a4.200 4.200 0 0 1 4.200 4.200c0 3.200-4.200 6.800-4.200 6.800s-4.200-3.600-4.200-6.800a4.200 4.200 0 0 1 4.200-4.200z" fill="#0f78b4"/><path d="M47 8a4.200 4.200 0 0 1 4.200 4.200c0 3.200-4.200 6.800-4.200 6.800s-4.200-3.600-4.200-6.800a4.200 4.200 0 0 1 4.200-4.200z" fill="#0f78b4"/><g fill="#eee"><rect x="12" y="11.500" width="4" height="1.200"/><rect x="45" y="11.500" width="4" height="1.200"/></g><g fill="#d8d8d8" opacity="0.850"><rect x="27" y="9" width="9" height="1.200"/><rect x="27" y="11.200" width="9" height="0.800"/><rect x="27" y="13" width="9" height="0.800"/><rect x="27" y="14.800" width="7" height="0.800"/><rect x="60" y="9" width="9" height="1.200"/><rect x="60" y="11.200" width="9" height="0.800"/><rect x="60" y="13" width="9" height="0.800"/><rect x="60" y="14.800" width="7" height="0.800"/></g><g fill="#22c8e0"><circle cx="4" cy="24" r="1.100"/><circle cx="36" cy="18" r="1.100"/><circle cx="68" cy="18" r="1.100"/></g></svg>

<!-- ===== slide ===== -->
<div class="a" id="slide" style="left:164px;top:172px;width:791px;height:445px;background:linear-gradient(180deg,#b9b9b9 0%,#9b9b9b 20%,#777 42%,#555 58%,#414141 72%,#3e3e3e 100%);"></div>
<!-- globe watermark: off-slide (lighter) and on-slide -->
<svg style="left:145px;top:153px" width="828" height="486" viewBox="145 153 828 486">
<defs>
<clipPath id="cpAll"><rect x="146" y="153" width="827" height="486"/></clipPath><clipPath id="cpSlide"><rect x="164" y="172" width="791" height="445"/></clipPath>
<clipPath id="cpOff"><path d="M145 153H973V639H145Z M164 172V617H955V172Z" clip-rule="evenodd"/></clipPath>
<clipPath id="cpInner"><ellipse cx="662.500" cy="382.500" rx="250" ry="262"/></clipPath>
<g id="gLines">
<path fill-rule="evenodd" d="M377.500 382.500a285 285 0 1 0 570 0a285 285 0 1 0 -570 0Z M412.500 382.500a250 262 0 1 0 500 0a250 262 0 1 0 -500 0Z"/>
<g clip-path="url(#cpInner)">
<rect x="645" y="100" width="35" height="565"/>
<rect x="400" y="367" width="525" height="31"/>
<ellipse cx="662.500" cy="382.500" rx="150.500" ry="279" fill="none" stroke-width="25"/>
</g>
</g>
<linearGradient id="gLn" x1="0" y1="153" x2="0" y2="639" gradientUnits="userSpaceOnUse"><stop offset="0" stop-color="#101010"/><stop offset="0.300" stop-color="#303030"/><stop offset="0.520" stop-color="#606060"/><stop offset="0.720" stop-color="#d0d0d0"/><stop offset="1" stop-color="#e8e8e8"/></linearGradient><clipPath id="cpWork"><rect x="146" y="153" width="827" height="486"/></clipPath>
</defs>
<g clip-path="url(#cpWork)"><use href="#gLines" fill="url(#gLn)" stroke="url(#gLn)" opacity="0.080"/></g>
</svg>
<!-- slide title / nav -->
<svg style="left:165px;top:172px" width="791" height="445" viewBox="165 172 791 445">
<g fill="none" stroke="#cfcfcf" stroke-width="6" stroke-linecap="round" stroke-linejoin="round" opacity="0.85">
<path d="M197 189L183 205L197 221"/>
<path d="M343 189L357 205L343 221"/>
</g>
<g fill="#d2d2d2" opacity="0.85"><circle cx="208" cy="204.500" r="3.200"/><circle cx="220" cy="204.500" r="3.200"/><circle cx="232" cy="204.500" r="3.200"/></g>
<path d="M196 371.500H337" stroke="#fff" stroke-width="1"/>
<!-- cycle arrows -->
<g fill="#f1f1f1">
<path d="M234 445.700L221 433.100V439.200H216Q195.900 439.200 195.900 459.200V534.700Q195.900 554.700 215.900 554.700H247.100V541.600H218Q209 541.600 209 532.600V461.300Q209 452.300 218 452.300H221V458.100Z"/>
<path d="M284.800 433.100H316Q336 433.100 336 453.100V528.600Q336 548.600 316 548.600H310.300V554.500L297.900 542L310.300 529.600V535.500H314Q323 535.500 323 526.500V454.700Q323 445.700 314 445.700H284.800Z"/>
</g>
</svg>
<span class="t w" style="left:248.5px;top:191px;font-size:24px;line-height:30px;letter-spacing:-0.57px">Slide 6</span>
<span class="t w" style="left:196.2px;top:242px;font-size:13px;line-height:16px;font-weight:bold;letter-spacing:0.05px">Slide Body Text</span>
<div class="a w" style="left:199px;top:265px;width:150px;font-size:10px;line-height:13.200px;color:#fff;white-space:nowrap;letter-spacing:0.050px">The quick brown fox jumped<br>over the lazy dog. The quick<br>brown fox jumped over the<br>lazy dog. The quick brown fox<br>jumped over the lazy dog. The<br>quick brown fox jumped over<br>the lazy dog.</div>
<span class="t" style="left:205.9px;top:384.500px;font-size:24px;line-height:30px;font-weight:bold;color:#ffe36e;letter-spacing:-0.59px">SUMMARY</span>
<div class="a w" style="left:224px;top:461.500px;width:100px;font-size:10px;line-height:13.300px;color:#fff;white-space:nowrap;letter-spacing:0.050px">The quick brown fox<br>jumped over the<br>lazy dog. The quick<br>brown fox jumped<br>over the lazy dog.</div>
<svg style="left:145px;top:153px" width="828" height="486" viewBox="145 153 828 486">
<defs>
<filter id="glowW" x="-30%" y="-50%" width="160%" height="200%"><feGaussianBlur stdDeviation="4.500"/></filter>
<linearGradient id="gBezel" x1="0" y1="0" x2="0" y2="1"><stop offset="0" stop-color="#6099c6"/><stop offset="0.500" stop-color="#4c88b6"/><stop offset="1" stop-color="#2e6a96"/></linearGradient><linearGradient id="gEdge" x1="0" y1="0" x2="0" y2="1"><stop offset="0" stop-color="#3f6f97"/><stop offset="1" stop-color="#1f4d70"/></linearGradient><linearGradient id="gBand" x1="0" y1="0" x2="0" y2="1"><stop offset="0" stop-color="#5d97c3"/><stop offset="0.500" stop-color="#3f7fb0"/><stop offset="1" stop-color="#2c6a98"/></linearGradient><filter id="soft" x="-5%" y="-5%" width="110%" height="110%"><feGaussianBlur stdDeviation="1.200"/></filter><clipPath id="cpBaseIn"><path d="M460 491.900H603L619.400 501.800H700L716 491.900H858A26 32.300 0 0 1 832 524.200H486A26 32.300 0 0 1 460 491.900Z"/></clipPath>
<linearGradient id="gLight" x1="0" y1="0" x2="1" y2="1"><stop offset="0" stop-color="#78bcff"/><stop offset="0.180" stop-color="#b4daff"/><stop offset="0.330" stop-color="#ffffff"/><stop offset="0.520" stop-color="#e6f2ff"/><stop offset="0.750" stop-color="#a8d4ff"/><stop offset="1" stop-color="#98ccff"/></linearGradient>
<linearGradient id="gChart" x1="0" y1="0" x2="0" y2="1"><stop offset="0" stop-color="#044a72"/><stop offset="0.250" stop-color="#06608f"/><stop offset="0.600" stop-color="#1b98d6"/><stop offset="1" stop-color="#86d8ff"/></linearGradient>
<linearGradient id="gShade" x1="0" y1="0" x2="0" y2="1"><stop offset="0" stop-color="#3a6f9a"/><stop offset="1" stop-color="#1c3346"/></linearGradient>
</defs>
<!-- white arrow with blue glow -->
<g clip-path="url(#cpAll)">
<g filter="url(#glowW)" opacity="0.950">
<g fill="#3b86c4" stroke="#3b86c4" stroke-width="12" stroke-linejoin="round">
<path d="M572.900 181.800L540.300 210.400L572.900 239" fill="none" stroke-width="29" stroke-linecap="round"/>
<rect x="545" y="196.800" width="79.800" height="27.100" rx="8"/>
<rect x="639" y="196.800" width="85" height="27.100" rx="8"/>
</g></g>
<g fill="#fff">
<path d="M572.900 181.800L540.300 210.400L572.900 239" fill="none" stroke="#fff" stroke-width="17" stroke-linecap="round" stroke-linejoin="miter"/>
<rect x="545" y="196.800" width="79.800" height="27.100" rx="8"/>
<rect x="639" y="196.800" width="85" height="27.100" rx="8"/>
</g>
<!-- blue arrow with glow -->
<g filter="url(#glowW)" opacity="0.950">
<g fill="#1b82d4" stroke="#1b82d4" stroke-width="12" stroke-linejoin="round">
<path d="M775.500 549.300L808.300 579L775.500 608.700" fill="none" stroke-width="29.500" stroke-linecap="round"/>
<rect x="720.700" y="564.800" width="82" height="27.900" rx="9"/>
<rect x="619" y="564.800" width="87" height="27.900" rx="9"/>
</g></g>
<g fill="#40c4ff">
<path d="M775.500 549.300L808.300 579L775.500 608.700" fill="none" stroke="#40c4ff" stroke-width="17.500" stroke-linecap="round" stroke-linejoin="miter"/>
<rect x="720.700" y="564.800" width="82" height="27.900" rx="9"/>
<rect x="619" y="564.800" width="87" height="27.900" rx="9"/>
</g>
</g>
<!-- laptop lid -->
<path d="M484.400 488V279Q484.400 261 502.400 261H817.800Q835.800 261 835.800 279V488Z" fill="#c3c3c3"/>
<path d="M493.500 483.200V283.200Q493.500 271.200 505.500 271.200H814Q826 271.200 826 283.200V483.200Z" fill="url(#gEdge)"/>
<path d="M495.500 483.200V284.200Q495.500 273.200 506.500 273.200H813Q824 273.200 824 284.200V483.200Z" fill="url(#gBezel)" filter="url(#soft)"/>
<rect x="504.800" y="278" width="310.200" height="199.800" fill="url(#gLight)"/>
<rect x="515.300" y="287" width="290.200" height="181.800" fill="url(#gBand)"/>
<rect x="521.500" y="293.500" width="278.800" height="169.800" fill="url(#gChart)" stroke="#fff" stroke-width="1"/>
<rect x="620.600" y="274" width="75.400" height="15" rx="3.500" fill="#f2f9ff" stroke="#bcd9f4" stroke-width="0.800"/>
<!-- base -->
<path d="M600 483.200H716V492H600Z" fill="url(#gShade)"/>
<path d="M449.800 487Q449.800 483.200 453.600 483.200H607L619.400 493.200H700L712 483.200H864.200Q868 483.200 868 487A30 46 0 0 1 838 533H480A30 46 0 0 1 449.800 487Z" fill="#c3c3c3"/>
<path d="M460 491.900H603L619.400 501.800H700L716 491.900H858A26 32.300 0 0 1 832 524.200H486A26 32.300 0 0 1 460 491.900Z" fill="#404040"/>
<g clip-path="url(#cpBaseIn)"><use href="#gLines" fill="#d0d0d0" stroke="#d0d0d0" opacity="0.080"/></g>
<path d="M470 508H843" stroke="#c8c8c8" stroke-width="1.800"/>
<!-- pie -->
<g stroke="#fff" stroke-width="1.500" stroke-linejoin="round">
<path d="M618.300 377.800V299.800A78 78 0 1 1 580.720 446.150Z" fill="#ff8000"/>
<path d="M618.300 377.800L580.720 446.150A78 78 0 0 1 545.780 349.090Z" fill="#0099ff"/>
<path d="M618.300 377.800L545.780 349.090A78 78 0 0 1 576.510 311.940Z" fill="#ff2a00"/>
<path d="M618.300 377.800L576.510 311.940A78 78 0 0 1 618.300 299.800Z" fill="#aee000"/>
</g>
<g stroke="#fff" stroke-width="1.600">
<rect x="744.200" y="341.700" width="6.600" height="6.600" fill="#ff8000"/>
<rect x="744.200" y="364.100" width="6.600" height="6.600" fill="#0099ff"/>
<rect x="744.200" y="386.500" width="6.600" height="6.600" fill="#ff2a00"/>
<rect x="744.200" y="408.900" width="6.600" height="6.600" fill="#aee000"/>
</g>
<g font-family="Liberation Sans, sans-serif" font-size="11.500" fill="#000">
<text x="664" y="395.500">58%</text>
<text x="563" y="409.700">23%</text>
<text x="563" y="347">10%</text>
<text x="596" y="326.600">9%</text>
<text x="755" y="349" font-size="12">1st Qtr</text>
<text x="755" y="371.400" font-size="12">2nd Qtr</text>
<text x="755" y="393.800" font-size="12">3rd Qtr</text>
<text x="755" y="416.200" font-size="12">4th Qtr</text>
</g>
<g font-family="Liberation Sans, sans-serif" font-size="22.500" font-weight="bold" fill="#fff">
<text transform="translate(476 458.500) rotate(-90) scale(0.834 1)" x="0" y="0">DATA TRANSFER</text>
<text transform="translate(844.500 298.400) rotate(90) scale(0.834 1)" x="0" y="0">DATA TRANSFER</text>
</g>
</svg>


<!-- thumbnail pane scrollbar -->
<div class="a" style="left:126px;top:155px;width:14px;height:485px;background:#dadada"></div>
<div class="a" style="left:126px;top:155px;width:14px;height:15px;box-sizing:border-box;background:#fff;border:1px solid #b5b5b5"></div>
<div class="a" style="left:130px;top:160px;width:0;height:0;border-left:3.500px solid transparent;border-right:3.500px solid transparent;border-bottom:4px solid #666"></div>
<div class="a" style="left:126px;top:170px;width:14px;height:211px;box-sizing:border-box;background:#fff;border:1px solid #b5b5b5"></div>
<div class="a" style="left:126px;top:626px;width:14px;height:14px;box-sizing:border-box;background:#fff;border:1px solid #b5b5b5"></div>
<div class="a" style="left:130px;top:631px;width:0;height:0;border-left:3.500px solid transparent;border-right:3.500px solid transparent;border-top:4px solid #666"></div>
<div class="a" style="left:144px;top:153px;width:1px;height:488px;background:#cdcdcd"></div>
<div class="a" style="left:147px;top:639px;width:841px;height:1px;background:#cdcdcd"></div>
<!-- main scrollbar -->
<div class="a" style="left:973px;top:155px;width:15px;height:445px;background:#dadada"></div>
<div class="a" style="left:973px;top:155px;width:15px;height:15px;box-sizing:border-box;background:#fff;border:1px solid #b5b5b5"></div>
<div class="a" style="left:977px;top:160px;width:0;height:0;border-left:3.500px solid transparent;border-right:3.500px solid transparent;border-bottom:4px solid #666"></div>
<div class="a" style="left:973px;top:326px;width:15px;height:19px;box-sizing:border-box;background:#fff;border:1px solid #b5b5b5"></div>
<div class="a" style="left:973px;top:568px;width:15px;height:15px;box-sizing:border-box;background:#fff;border:1px solid #b5b5b5"></div>
<div class="a" style="left:977px;top:574px;width:0;height:0;border-left:3.500px solid transparent;border-right:3.500px solid transparent;border-top:4px solid #666"></div>
<svg style="left:976px;top:589px" width="9" height="10" viewBox="0 0 9 10"><path d="M4.500 0.500l3.500 4h-7z M4.500 5.500l3.500 4h-7z" fill="#666"/></svg>
<svg style="left:976px;top:603px" width="9" height="10" viewBox="0 0 9 10"><path d="M4.500 4.500l3.500-4h-7z M4.500 9.500l3.500-4h-7z" fill="#666"/></svg>

<!-- ===== status bar ===== -->
<div class="a" id="status" style="left:1px;top:642px;width:988px;height:22px;background:#f1f1f1;"></div>
<div class="a" style="left:1px;top:642px;width:988px;height:1px;background:#c8c8c8"></div>
<span class="t" style="left:7.8px;top:646px;letter-spacing:-0.36px">Slide 7 of 16</span>
<svg style="left:91px;top:646px" width="16" height="13" viewBox="0 0 16 13"><path d="M6.500 2.500v9.500 M6.500 2.500c-2-1.500-4-1.500-6-1v10c2-0.500 4-0.500 6 0.500c1-0.700 2-1 3.500-1 M6.500 2.500c1-0.800 2.500-1.300 4-1.300" fill="none" stroke="#555" stroke-width="1"/><path d="M14 1l1.500 1.500l-5.500 6l-2.300 0.800l0.800-2.300z" fill="#f1f1f1" stroke="#555" stroke-width="0.900"/></svg>
<span class="t" style="left:121.8px;top:646px;letter-spacing:-0.35px">English (United States)</span>
<svg style="left:473px;top:647px" width="12" height="12" viewBox="0 0 12 12"><path d="M6 0l2.500 3h-5z" fill="#666"/><path d="M1 5h10 M0 8h12 M0 11h12" stroke="#666" stroke-width="1"/></svg>
<span class="t" style="left:489px;top:646px;letter-spacing:-0.56px">Notes</span>
<svg style="left:540px;top:647px" width="13" height="13" viewBox="0 0 13 13"><path d="M0.500 0.500h12v8h-6l-3 3.500v-3.500h-3z" fill="#666"/></svg>
<span class="t" style="left:555.8px;top:646px;letter-spacing:-0.7px">Comments</span>
<div class="a" style="left:629px;top:642px;width:38px;height:22px;background:#c9c9c9"></div>
<svg style="left:641px;top:646px" width="15" height="13" viewBox="0 0 15 13"><rect x="0.500" y="0.500" width="14" height="12" fill="none" stroke="#666" stroke-width="1"/><path d="M3.500 0.500v12 M3.500 9.500h11" stroke="#666" stroke-width="1"/><rect x="5.500" y="2.500" width="7" height="4.500" fill="none" stroke="#666" stroke-width="1"/></svg>
<svg style="left:679px;top:646px" width="14" height="13" viewBox="0 0 14 13"><path d="M0.500 0.500h5v4.500h-5z M8.500 0.500h5v4.500h-5z M0.500 7.500h5v4.500h-5z M8.500 7.500h5v4.500h-5z" fill="none" stroke="#666" stroke-width="1"/></svg>
<svg style="left:717px;top:646px" width="13" height="13" viewBox="0 0 13 13"><path d="M6.500 1.500v11 M6.500 1.500c-2-1-4-1-6-0.500v10c2-0.500 4-0.500 6 0.500c2-1 4-1 6-0.500v-10c-2-0.500-4-0.500-6 0.500" fill="none" stroke="#666" stroke-width="1"/><path d="M2 3.500h3 M2 5.500h3 M2 7.500h3 M8 3.500h3 M8 5.500h3 M8 7.500h3" stroke="#666" stroke-width="0.800"/></svg>
<svg style="left:755px;top:647px" width="14" height="12" viewBox="0 0 14 12"><path d="M0 0.500h14 M1.500 1v5.500h11v-5.500 M7 6.500v4 M4 11h6" fill="none" stroke="#666" stroke-width="1.100"/></svg>
<div class="a" style="left:787px;top:652px;width:6px;height:2px;background:#555"></div>
<div class="a" style="left:797px;top:652px;width:99px;height:1px;background:#9a9a9a"></div>
<div class="a" style="left:846px;top:649px;width:1px;height:7px;background:#9a9a9a"></div>
<div class="a" style="left:835px;top:647px;width:4px;height:11px;background:#555"></div>
<div class="a" style="left:901px;top:652px;width:8px;height:2px;background:#555"></div>
<div class="a" style="left:904px;top:649px;width:2px;height:8px;background:#555"></div>
<span class="t" style="left:922.5px;top:646px;letter-spacing:-1.51px">83%</span>
<svg style="left:958px;top:647px" width="13" height="13" viewBox="0 0 13 13"><rect x="0.500" y="0.500" width="12" height="12" fill="none" stroke="#666" stroke-width="1"/><path d="M6.500 2v3 M6.500 8v3 M2 6.500h3 M8 6.500h3" stroke="#666" stroke-width="1"/><path d="M5.500 3.500l1-1.500l1 1.500z M5.500 9.500l1 1.500l1-1.500z M3.500 5.500l-1.500 1l1.500 1z M9.500 5.500l1.500 1l-1.500 1z" fill="#666"/></svg>

<!-- window border -->
<div class="a" style="left:0;top:60px;width:1px;height:605px;background:#b7472a;"></div>
<div class="a" style="left:989px;top:60px;width:1px;height:605px;background:#b7472a;"></div>
<div class="a" style="left:0;top:664px;width:990px;height:1px;background:#b7472a;"></div>
</body>
</html>
